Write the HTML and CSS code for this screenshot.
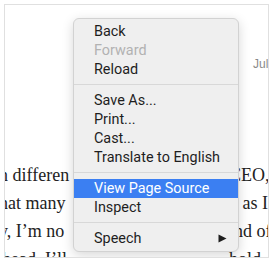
FILE: index.html
```html
<!DOCTYPE html>
<html>
<head>
<meta charset="utf-8">
<link rel="stylesheet" href="styles.css">
</head>
<body>
<div class="frame">
  <div class="meta">Jul 12, 2019</div>
  <div class="article">
    <div class="line"><span class="l">in differen</span><span class="r">CEO,</span></div>
    <div class="line"><span class="l">that many</span><span class="r">g as I</span></div>
    <div class="line"><span class="l">ly, I’m no</span><span class="r">ind of</span></div>
    <div class="line"><span class="l">ahead. I’ll</span><span class="r">hold</span></div>
  </div>
  <div class="menu">
    <div class="item">Back</div>
    <div class="item disabled">Forward</div>
    <div class="item">Reload</div>
    <div class="sep"></div>
    <div class="item">Save As...</div>
    <div class="item">Print...</div>
    <div class="item">Cast...</div>
    <div class="item">Translate to English</div>
    <div class="sep"></div>
    <div class="item active">View Page Source</div>
    <div class="item">Inspect</div>
    <div class="sep"></div>
    <div class="item sub">Speech<svg class="arrow" width="9" height="9" viewBox="0 0 9 9"><polygon points="0.5,0.5 8.5,4.5 0.5,8.5" fill="#1e1e1e"/></svg></div>
  </div>
</div>
</body>
</html>
```

FILE: styles.css
```css
html, body {
  margin: 0;
  padding: 0;
  background: #ffffff;
}

.frame {
  position: relative;
  margin: 4px;
  width: 263px;
  height: 252px;
  border: 1px solid #e0e0e0;
  overflow: hidden;
  background: #ffffff;
}

.meta {
  padding-top: 52px;
  padding-left: 248px;
  white-space: nowrap;
  font-family: "Liberation Sans", Arial, sans-serif;
  font-size: 12px;
  line-height: 14px;
  color: #8a8a8a;
}

.article {
  margin-top: 90px;
  margin-left: -11px;
  font-family: "Liberation Serif", "Times New Roman", serif;
  font-size: 18px;
  line-height: 28px;
  color: #222222;
}

.line {
  display: flex;
  white-space: nowrap;
}

.l {
  flex: none;
  width: 84px;
  overflow: hidden;
}

.r {
  flex: none;
  margin-left: 151px;
}

.menu {
  position: absolute;
  left: 68px;
  top: 13px;
  width: 164px;
  padding: 3px 0;
  background: #efefef;
  border: 1px solid #d2d2d2;
  border-radius: 6px;
  box-shadow: 0 3px 12px rgba(0, 0, 0, 0.16);
  font-family: Roboto, "Liberation Sans", Arial, sans-serif;
  font-size: 14.4px;
  color: #1e1e1e;
}

.item {
  display: flex;
  align-items: center;
  justify-content: space-between;
  height: 19px;
  line-height: 19px;
  padding: 0 11px 0 20px;
  white-space: nowrap;
}

.item.disabled {
  color: #b2b2b2;
}

.item.active {
  background: #3b7ff2;
  color: #ffffff;
}

.sep {
  height: 1px;
  margin: 5px 0 6px;
  background: #d8d8d8;
}

.arrow {
  display: block;
}
```
